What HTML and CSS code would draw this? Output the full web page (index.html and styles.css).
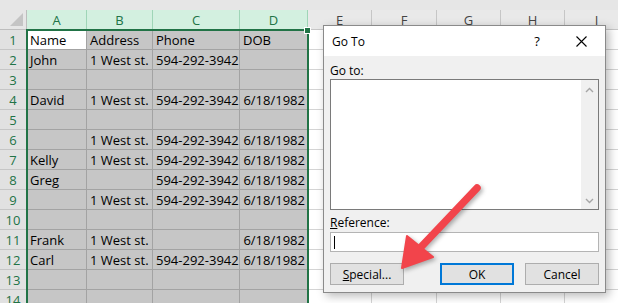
FILE: index.html
```html
<!DOCTYPE html>
<html lang="en">
<head>
    <meta charset="UTF-8">
    <title>Go To</title>
    <link rel="stylesheet" href="styles.css">
</head>
<body>
    <div class="topstrip"></div>
    <div id="sheet" class="sheet"></div>
    <div class="sel_border"><span class="sel_handle"></span></div>

    <div class="dialog">
        <div class="dlg_title">
            <span class="dlg_name">Go To</span>
            <span class="dlg_help">?</span>
            <svg class="dlg_close" width="11" height="11" viewBox="0 0 11 11"><path d="M0.5 0.5 L10.5 10.5 M10.5 0.5 L0.5 10.5" stroke="#000" stroke-width="1.1" fill="none"/></svg>
        </div>
        <div class="dlg_body">
            <div class="dlg_label">Go to:</div>
            <div class="listbox">
                <div class="scrollbar">
                    <svg width="9" height="6" viewBox="0 0 9 6"><path d="M1 5 L4.5 1.5 L8 5" stroke="#a6a6a6" stroke-width="1.4" fill="none"/></svg>
                    <svg width="9" height="6" viewBox="0 0 9 6"><path d="M1 1 L4.5 4.5 L8 1" stroke="#a6a6a6" stroke-width="1.4" fill="none"/></svg>
                </div>
            </div>
            <div class="dlg_label ref_label"><u>R</u>eference:</div>
            <div class="ref_input"><span class="caret"></span></div>
            <div class="btn_row">
                <button class="dlg_btn btn_special"><u>S</u>pecial...</button>
                <button class="dlg_btn btn_ok">OK</button>
                <button class="dlg_btn">Cancel</button>
            </div>
        </div>
    </div>

    <svg class="arrow" width="618" height="303" viewBox="0 0 618 303">
        <g fill="#f2444b" stroke="#f2444b">
            <path d="M477 188 L421 247" stroke-width="7.5" stroke-linecap="round" fill="none"/>
            <path d="M402 268 L407 236 L433 257 Z" stroke-width="2" stroke-linejoin="round"/>
        </g>
    </svg>

    <script>
        const cols = ['A', 'B', 'C', 'D', 'E', 'F', 'G', 'H', 'I'];
        const phone = '594-292-3942';
        const dob = '6/18/1982';
        const addr = '1 West st.';
        const rows = [
            ['Name', 'Address', 'Phone', 'DOB'],
            ['John', addr, phone, ''],
            ['', '', '', ''],
            ['David', addr, phone, dob],
            ['', '', '', ''],
            ['', addr, phone, dob],
            ['Kelly', addr, phone, dob],
            ['Greg', '', phone, dob],
            ['', addr, phone, dob],
            ['', '', '', ''],
            ['Frank', addr, '', dob],
            ['Carl', addr, phone, dob],
            ['', '', '', ''],
            ['', '', '', '']
        ];

        const sheet = document.getElementById('sheet');

        function addCell(cls, text) {
            const cell = document.createElement('div');
            cell.className = cls;
            cell.textContent = text;
            sheet.appendChild(cell);
        }

        // header row
        addCell('corner', '');
        cols.forEach((c, i) => {
            addCell(i < 4 ? 'colhead colhead_sel' : 'colhead', c);
        });

        rows.forEach((row, r) => {
            addCell('rowhead', r + 1);
            cols.forEach((c, i) => {
                let cls = 'cell';
                let text = '';
                if (i < 4) {
                    text = row[i];
                    cls += (r === 0 && i === 0) ? ' cell_active' : ' cell_sel';
                    if (i === 3 && r > 0) cls += ' cell_num';
                }
                addCell(cls, text);
            });
        });
    </script>
</body>
</html>
```

FILE: styles.css
```css
body {
    margin: 0;
    width: 618px;
    height: 303px;
    overflow: hidden;
    position: relative;
    background: #ffffff;
    font-family: "Open Sans", "Liberation Sans", sans-serif;
}

.topstrip {
    height: 10px;
    background: #e6e6e6;
}

.sheet {
    display: grid;
    grid-template-columns: 27px 60px 66px 87px 68px 64px 65px 64px 64px 64px;
    grid-auto-rows: 20px;
    width: 629px;
    font-size: 13px;
}
.sheet > div {
    box-sizing: border-box;
    border-right: 1px solid #d4d4d4;
    border-bottom: 1px solid #d4d4d4;
    line-height: 20px;
    white-space: nowrap;
    overflow: hidden;
}

.corner {
    background: #e6e6e6;
    position: relative;
    border-color: #bdbdbd !important;
}
.corner::after {
    content: "";
    position: absolute;
    right: 3px;
    bottom: 3px;
    border-left: 13px solid transparent;
    border-bottom: 13px solid #c4c4c4;
}

.colhead {
    background: #e9e9e9;
    color: #444;
    text-align: center;
    border-color: #c6c6c6 !important;
}
.colhead_sel {
    background: #d3f0e0;
    color: #217346;
    border-right-color: #9fd5b7 !important;
}

.rowhead {
    background: #e1e1e1;
    color: #217346;
    text-align: center;
    border-color: #c6c6c6 !important;
}

.cell {
    padding-left: 3px;
    color: #000;
}
.cell_sel {
    background: #c6c6c6;
    border-color: #a3a3a3 !important;
}
.cell_active {
    background: #ffffff;
    border-color: #a3a3a3 !important;
}
.cell_num {
    text-align: right;
    padding-right: 2px;
}

.sel_border {
    position: absolute;
    left: 26px;
    top: 29px;
    width: 279px;
    height: 290px;
    border: 2px solid #217346;
}
.sel_handle {
    position: absolute;
    right: -4px;
    top: -4px;
    width: 5px;
    height: 5px;
    background: #217346;
    border: 1px solid #fff;
}

/* dialog */
.dialog {
    position: absolute;
    left: 323px;
    top: 25px;
    width: 281px;
    height: 266px;
    border: 1px solid #8a8a8a;
    background: #f0f0f0;
    box-shadow: 3px 3px 9px rgba(0, 0, 0, 0.28);
    font-size: 12px;
    color: #000;
}
.dlg_title {
    height: 30px;
    background: #ffffff;
    display: flex;
    align-items: center;
    padding-left: 8px;
}
.dlg_name {
    flex: 1;
}
.dlg_help {
    width: 12px;
    text-align: center;
    margin-right: 33px;
    font-size: 13px;
}
.dlg_close {
    margin-right: 18px;
}

.dlg_body {
    padding: 7px 6px 0 6px;
}
.dlg_label {
    height: 16px;
    line-height: 16px;
}
.listbox {
    height: 129px;
    border: 1px solid #7a7a7a;
    background: #ffffff;
    display: flex;
    justify-content: flex-end;
}
.scrollbar {
    width: 17px;
    background: #f0f0f0;
    display: flex;
    flex-direction: column;
    justify-content: space-between;
    align-items: center;
    padding: 7px 0 5px 0;
}
.ref_label {
    margin-top: 5px;
}
.ref_input {
    height: 18px;
    border: 1px solid #b4b4b4;
    background: #ffffff;
    margin-top: 1px;
    display: flex;
    align-items: center;
}
.caret {
    width: 1px;
    height: 13px;
    background: #000;
    margin-left: 3px;
}

.btn_row {
    display: flex;
    gap: 11px;
    margin-top: 11px;
}
.dlg_btn {
    width: 74px;
    height: 22px;
    padding: 0;
    background: #e1e1e1;
    border: 1px solid #adadad;
    font-family: "Open Sans", "Liberation Sans", sans-serif;
    font-size: 12px;
    color: #000;
}
.btn_special {
    margin-right: auto;
}
.btn_ok {
    border: 2px solid #0078d7;
}

.arrow {
    position: absolute;
    left: 0;
    top: 0;
    filter: drop-shadow(2px 2px 2px rgba(0, 0, 0, 0.3));
}
```
